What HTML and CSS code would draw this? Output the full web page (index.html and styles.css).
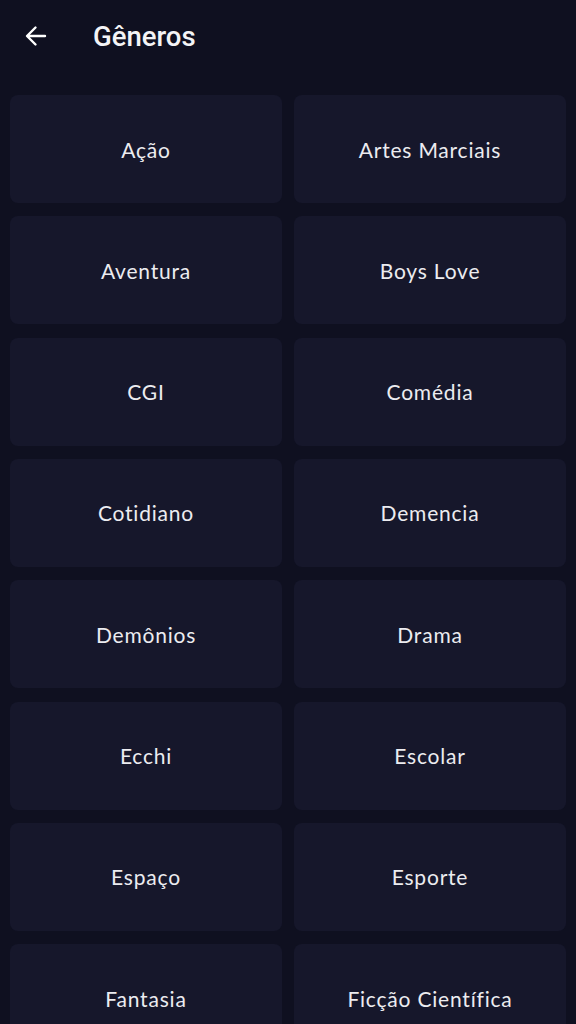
FILE: index.html
```html
<!DOCTYPE html>
<html lang="pt">
<head>
<meta charset="utf-8">
<link rel="stylesheet" href="styles.css">
</head>
<body>
<header class="topbar">
  <svg class="back" width="24" height="24" viewBox="0 0 24 24" aria-hidden="true">
    <path d="M21 12H3.5M11.5 3.5L3 12l8.5 8.5" fill="none" stroke="#ffffff" stroke-width="2.4" stroke-linecap="round" stroke-linejoin="round"/>
  </svg>
  <h1 class="title">Gêneros</h1>
</header>
<main class="grid">
  <div class="card">Ação</div>
  <div class="card">Artes Marciais</div>
  <div class="card">Aventura</div>
  <div class="card">Boys Love</div>
  <div class="card">CGI</div>
  <div class="card">Comédia</div>
  <div class="card">Cotidiano</div>
  <div class="card">Demencia</div>
  <div class="card">Demônios</div>
  <div class="card">Drama</div>
  <div class="card">Ecchi</div>
  <div class="card">Escolar</div>
  <div class="card">Espaço</div>
  <div class="card">Esporte</div>
  <div class="card">Fantasia</div>
  <div class="card">Ficção Científica</div>
</main>
</body>
</html>
```

FILE: styles.css
```css
html, body {
  margin: 0;
  padding: 0;
  background: #0f1020;
  height: 1024px;
  overflow: hidden;
}
body {
  font-family: "Lato", "Noto Sans", sans-serif;
  color: #f0f0f2;
}
.topbar {
  height: 72px;
  display: flex;
  align-items: center;
  padding: 0 0 0 24px;
  box-sizing: border-box;
}
.back {
  width: 24px;
  height: 24px;
  flex: none;
}
.title {
  margin: 0 0 0 45px;
  font-family: "Roboto", sans-serif;
  font-weight: 500;
  font-size: 27.5px;
  color: #f4f4f6;
}
.grid {
  display: grid;
  grid-template-columns: 1fr 1fr;
  grid-auto-rows: 108px;
  column-gap: 12px;
  row-gap: 13.33px;
  padding: 23px 10px 0 10px;
}
.card {
  background: #16172b;
  border-radius: 8px;
  display: flex;
  align-items: center;
  justify-content: center;
  font-size: 21px;
  letter-spacing: 0.8px;
  color: #ececf0;
}
```
